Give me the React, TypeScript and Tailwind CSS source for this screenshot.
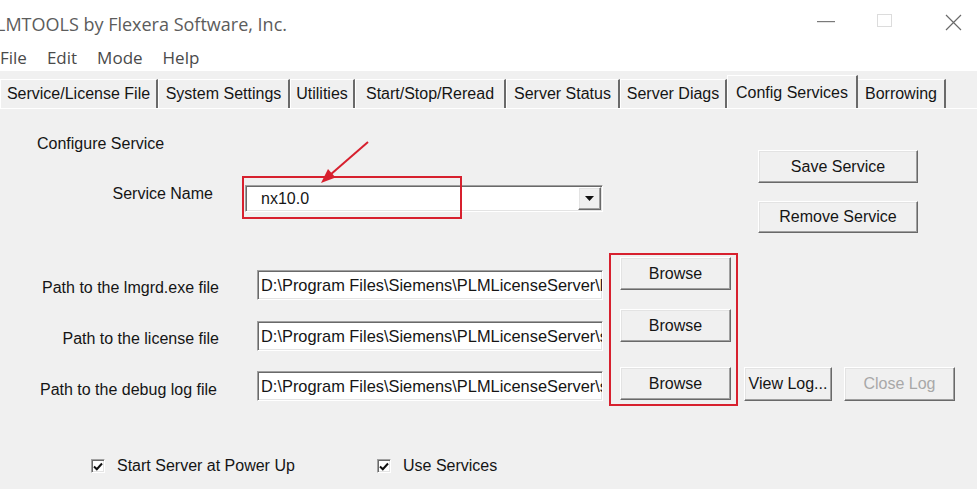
import React from 'react';

const raised =
  'bg-[#f0f0f0] border border-t-white border-l-white border-r-[#696969] border-b-[#696969] shadow-[inset_-1px_-1px_0_#a0a0a0,inset_1px_1px_0_#e3e3e3]';
const sunken =
  'bg-white border border-t-[#a0a0a0] border-l-[#a0a0a0] border-r-white border-b-white shadow-[inset_1px_1px_0_#696969,inset_-1px_-1px_0_#e3e3e3]';

function Btn({ label, className, disabled }: { label: string; className: string; disabled?: boolean }) {
  return (
    <div
      className={`${raised} ${className} flex items-center justify-center leading-[18px] ${
        disabled ? 'text-[#a8a8a8]' : 'text-[#151515]'
      }`}
    >
      {label}
    </div>
  );
}

function PathField({ value }: { value: string }) {
  return (
    <div className={`${sunken} w-[346px] h-[30px] pl-[3px] flex items-center overflow-hidden whitespace-nowrap text-[16.4px] leading-[18px]`}>
      {value}
    </div>
  );
}

function Check({ label }: { label: string }) {
  return (
    <div className="flex items-center gap-[12px]">
      <div className={`${sunken} w-[14px] h-[14px] flex items-center justify-center`}>
        <svg width="10" height="9" viewBox="0 0 10 9">
          <path d="M1 4.5 L3.8 7.2 L9 1.5" fill="none" stroke="#111" strokeWidth="2" />
        </svg>
      </div>
      <span className="leading-[18px]">{label}</span>
    </div>
  );
}

const tabs = [
  { label: 'Service/License File', w: 'w-[158px]' },
  { label: 'System Settings', w: 'w-[132px]' },
  { label: 'Utilities', w: 'w-[65px]' },
  { label: 'Start/Stop/Reread', w: 'w-[151px]' },
  { label: 'Server Status', w: 'w-[114px]' },
  { label: 'Server Diags', w: 'w-[107px]' },
];

export default function App() {
  return (
    <div className="relative w-[977px] h-[489px] overflow-hidden bg-[#f0f0f0] text-[16px] text-[#151515] font-['Liberation_Sans',Arial,sans-serif]">
      {/* title bar */}
      <div className="h-[43px] bg-white flex items-center justify-between pt-[5px]">
        <span className="ml-[-4px] text-[18px] text-[#5c5c5c] font-['Open_Sans','Noto_Sans',sans-serif]">
          LMTOOLS by Flexera Software, Inc.
        </span>
        <div className="flex items-center pr-[15px]">
          <svg width="18" height="2" className="mr-[42px] mt-[-5px]">
            <rect width="18" height="1.2" fill="#7a7a7a" />
          </svg>
          <svg width="16" height="16" className="mr-[52px] mt-[-5px]">
            <rect x="0.5" y="0.5" width="14" height="12" fill="none" stroke="#dcdcdc" />
          </svg>
          <svg width="17" height="17" className="mt-[-3px]">
            <path d="M1 1 L16 16 M16 1 L1 16" stroke="#6a6a6a" strokeWidth="1.2" />
          </svg>
        </div>
      </div>

      {/* menu bar */}
      <div className="h-[28px] bg-white flex items-center gap-[20px] text-[17px] text-[#4a4a4a] font-['Open_Sans','Noto_Sans',sans-serif] leading-none">
        <span>File</span>
        <span>Edit</span>
        <span>Mode</span>
        <span>Help</span>
      </div>

      {/* tabs */}
      <div className="h-[37px] flex items-end">
        {tabs.map((t) => (
          <div
            key={t.label}
            className={`${t.w} h-[29px] shrink-0 flex items-center justify-center border-t border-l border-t-white border-l-white border-r-2 border-r-[#6a6a6a] bg-[#f0f0f0]`}
          >
            {t.label}
          </div>
        ))}
        <div className="w-[131px] h-[33px] shrink-0 flex items-start pt-[5px] justify-center border-t border-l border-t-white border-l-white border-r-2 border-r-[#6a6a6a] bg-[#f0f0f0]">
          Config Services
        </div>
        <div className="w-[88px] h-[29px] shrink-0 flex items-center justify-center border-t border-t-white border-r-2 border-r-[#6a6a6a] bg-[#f0f0f0]">
          Borrowing
        </div>
      </div>

      {/* panel */}
      <div className="border-t border-t-white">
        <div className="h-[148px] flex">
          <div className="w-[758px] pt-[26px]">
            <div className="pl-[37px] leading-[18px]">Configure Service</div>
            <div className="mt-[32px] flex items-start">
              <div className="w-[213px] text-right leading-[18px]">Service Name</div>
              <div className={`${sunken} ml-[32px] w-[358px] h-[27px] flex items-center`}>
                <span className="pl-[15px] flex-1 leading-[18px]">nx10.0</span>
                <div className={`${raised} w-[23px] h-[23px] mr-[1px] flex items-center justify-center`}>
                  <svg width="9" height="5" viewBox="0 0 9 5">
                    <path d="M0 0 H9 L4.5 5 Z" fill="#111" />
                  </svg>
                </div>
              </div>
            </div>
          </div>
          <div className="pt-[41px] flex flex-col gap-[18px]">
            <Btn label="Save Service" className="w-[160px] h-[33px]" />
            <Btn label="Remove Service" className="w-[160px] h-[32px]" />
          </div>
        </div>

        {/* path rows */}
        <div className="h-[43px] flex items-start">
          <div className="w-[219px] mt-[22px] text-right leading-[18px]">Path to the lmgrd.exe file</div>
          <div className="ml-[38px] mt-[13px]">
            <PathField value={'D:\\Program Files\\Siemens\\PLMLicenseServer\\lmgrd.exe'} />
          </div>
          <Btn label="Browse" className="ml-[17px] w-[111px] h-[33px]" />
        </div>
        <div className="mt-[9px] h-[41px] flex items-start">
          <div className="w-[219px] mt-[21px] text-right leading-[18px]">Path to the license file</div>
          <div className="ml-[38px] mt-[12px]">
            <PathField value={'D:\\Program Files\\Siemens\\PLMLicenseServer\\splm8.lic'} />
          </div>
          <Btn label="Browse" className="ml-[17px] w-[111px] h-[33px]" />
        </div>
        <div className="mt-[17px] h-[34px] flex items-start">
          <div className="w-[217px] mt-[14px] text-right leading-[18px]">Path to the debug log file</div>
          <div className="ml-[40px] mt-[4px]">
            <PathField value={'D:\\Program Files\\Siemens\\PLMLicenseServer\\splm_ugslmd.log'} />
          </div>
          <Btn label="Browse" className="ml-[17px] w-[111px] h-[33px]" />
          <Btn label="View Log..." className="ml-[13px] w-[88px] h-[34px]" />
          <Btn label="Close Log" className="ml-[12px] w-[111px] h-[34px]" disabled />
        </div>

        {/* checkboxes */}
        <div className="mt-[56px] pl-[91px] flex items-center">
          <div className="w-[286px]">
            <Check label="Start Server at Power Up" />
          </div>
          <Check label="Use Services" />
        </div>
      </div>

      {/* annotations */}
      <div className="absolute left-[242px] top-[176px] w-[220px] h-[43px] border-2 border-[#d7202e]" />
      <div className="absolute left-[609px] top-[253px] w-[129px] h-[153px] border-2 border-[#d7202e]" />
      <svg className="absolute left-[315px] top-[138px]" width="60" height="50" viewBox="0 0 60 50">
        <line x1="53" y1="4" x2="15" y2="37" stroke="#d7202e" strokeWidth="2" />
        <polygon points="6,45 20.5,39.5 13,31" fill="#d7202e" />
      </svg>
    </div>
  );
}
